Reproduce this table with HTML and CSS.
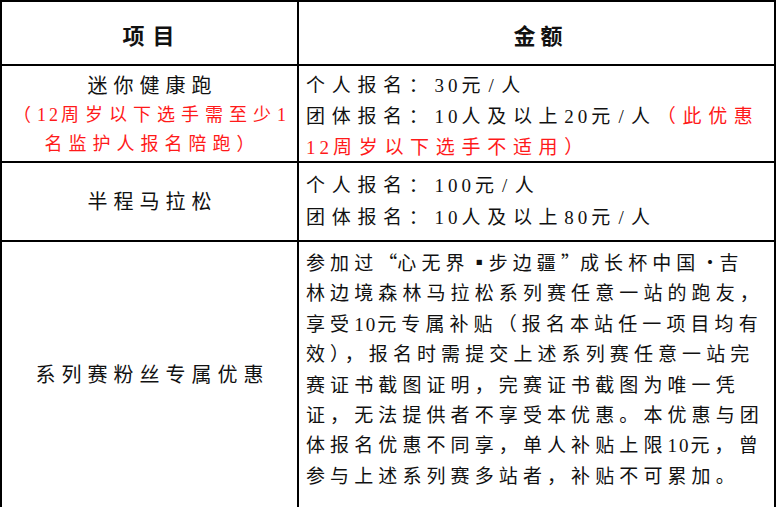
FILE: index.html
```html
<!DOCTYPE html>
<html lang="zh-CN">
<head>
<meta charset="utf-8">
<title>报名费用</title>
<link rel="stylesheet" href="styles.css">
</head>
<body>
<div class="fee-table">
  <div class="cell head left">项目</div>
  <div class="cell head right">金额</div>

  <div class="cell left row1">
    <div class="label">迷你健康跑</div>
    <div class="note">（<span class="num">12</span>周岁以下选手需至少1<br>名监护人报名陪跑）</div>
  </div>
  <div class="cell right row1 text">
    <div>个人报名：<span class="num">30</span>元<span class="sl">/</span>人<br>团体报名：<span class="num">10</span>人及以上<span class="num">20</span>元<span class="sl">/</span>人<span class="red">（此优惠<br><span class="num">12</span>周岁以下选手不适用）</span></div>
  </div>

  <div class="cell left row2">
    <div class="label">半程马拉松</div>
  </div>
  <div class="cell right row2 text">
    <div>个人报名：<span class="num">100</span>元<span class="sl">/</span>人<br>团体报名：<span class="num">10</span>人及以上<span class="num">80</span>元<span class="sl">/</span>人</div>
  </div>

  <div class="cell left row3">
    <div class="label">系列赛粉丝专属优惠</div>
  </div>
  <div class="cell right row3 long">
    <div>参加过<span class="fw">“</span>心无界<span class="fw">▪</span>步边疆<span class="fw">”</span>成长杯中国<span class="fw">•</span>吉<br>林边境森林马拉松系列赛任意一站的跑友，<br>享受<span class="num">10</span>元专属补贴（报名本站任一项目均有<br>效），报名时需提交上述系列赛任意一站完<br>赛证书截图证明，完赛证书截图为唯一凭<br>证，无法提供者不享受本优惠。本优惠与团<br>体报名优惠不同享，单人补贴上限<span class="num">10</span>元，曾<br>参与上述系列赛多站者，补贴不可累加。</div>
  </div>
</div>
</body>
</html>
```

FILE: styles.css
```css
html, body {
  margin: 0;
  padding: 0;
  background: #ffffff;
}

body {
  font-family: "Liberation Serif", "Noto Sans CJK SC", serif;
  color: #111111;
}

.fee-table {
  width: 776px;
  box-sizing: border-box;
  display: grid;
  grid-template-columns: 297px 477px;
  grid-template-rows: 64px 97px 79px 267px;
  border-top: 2px solid #000;
  border-left: 2px solid #000;
}

.cell {
  box-sizing: border-box;
  border-right: 2px solid #000;
  border-bottom: 2px solid #000;
  display: flex;
  flex-direction: column;
  justify-content: center;
  white-space: nowrap;
  overflow: hidden;
}

.left {
  align-items: center;
  text-align: center;
  padding-left: 6px;
}

.right {
  align-items: flex-start;
  padding-left: 7px;
}

.head {
  font-family: "Noto Sans CJK SC", sans-serif;
  font-weight: 700;
  font-size: 22px;
  letter-spacing: 8px;
  padding-top: 2px;
}

.head.right {
  align-items: center;
  padding-left: 8px;
  letter-spacing: 5px;
}

.label {
  font-size: 20px;
  letter-spacing: 6px;
  line-height: 30px;
}

.note {
  color: #ff1a1a;
  font-size: 18px;
  letter-spacing: 6px;
  line-height: 29px;
}

.note .num {
  letter-spacing: 3px;
}

.row1.left {
  padding-top: 2px;
}

.text {
  font-size: 19px;
  letter-spacing: 6.7px;
  line-height: 31px;
}

.text .num {
  letter-spacing: 4px;
}

.row1.text {
  padding-top: 6px;
}

.row2.text {
  line-height: 32px;
}

.long {
  font-size: 19px;
  letter-spacing: 5.1px;
  line-height: 30.4px;
  padding-bottom: 10px;
}

.long .num {
  letter-spacing: 2px;
}

.sl {
  display: inline-block;
  width: 8px;
  margin-right: 6px;
  text-align: center;
  letter-spacing: 0;
}

.red {
  color: #ff1a1a;
}

.fw {
  display: inline-block;
  width: 19px;
  text-align: center;
  font-family: "Noto Sans CJK SC", sans-serif;
}
```
